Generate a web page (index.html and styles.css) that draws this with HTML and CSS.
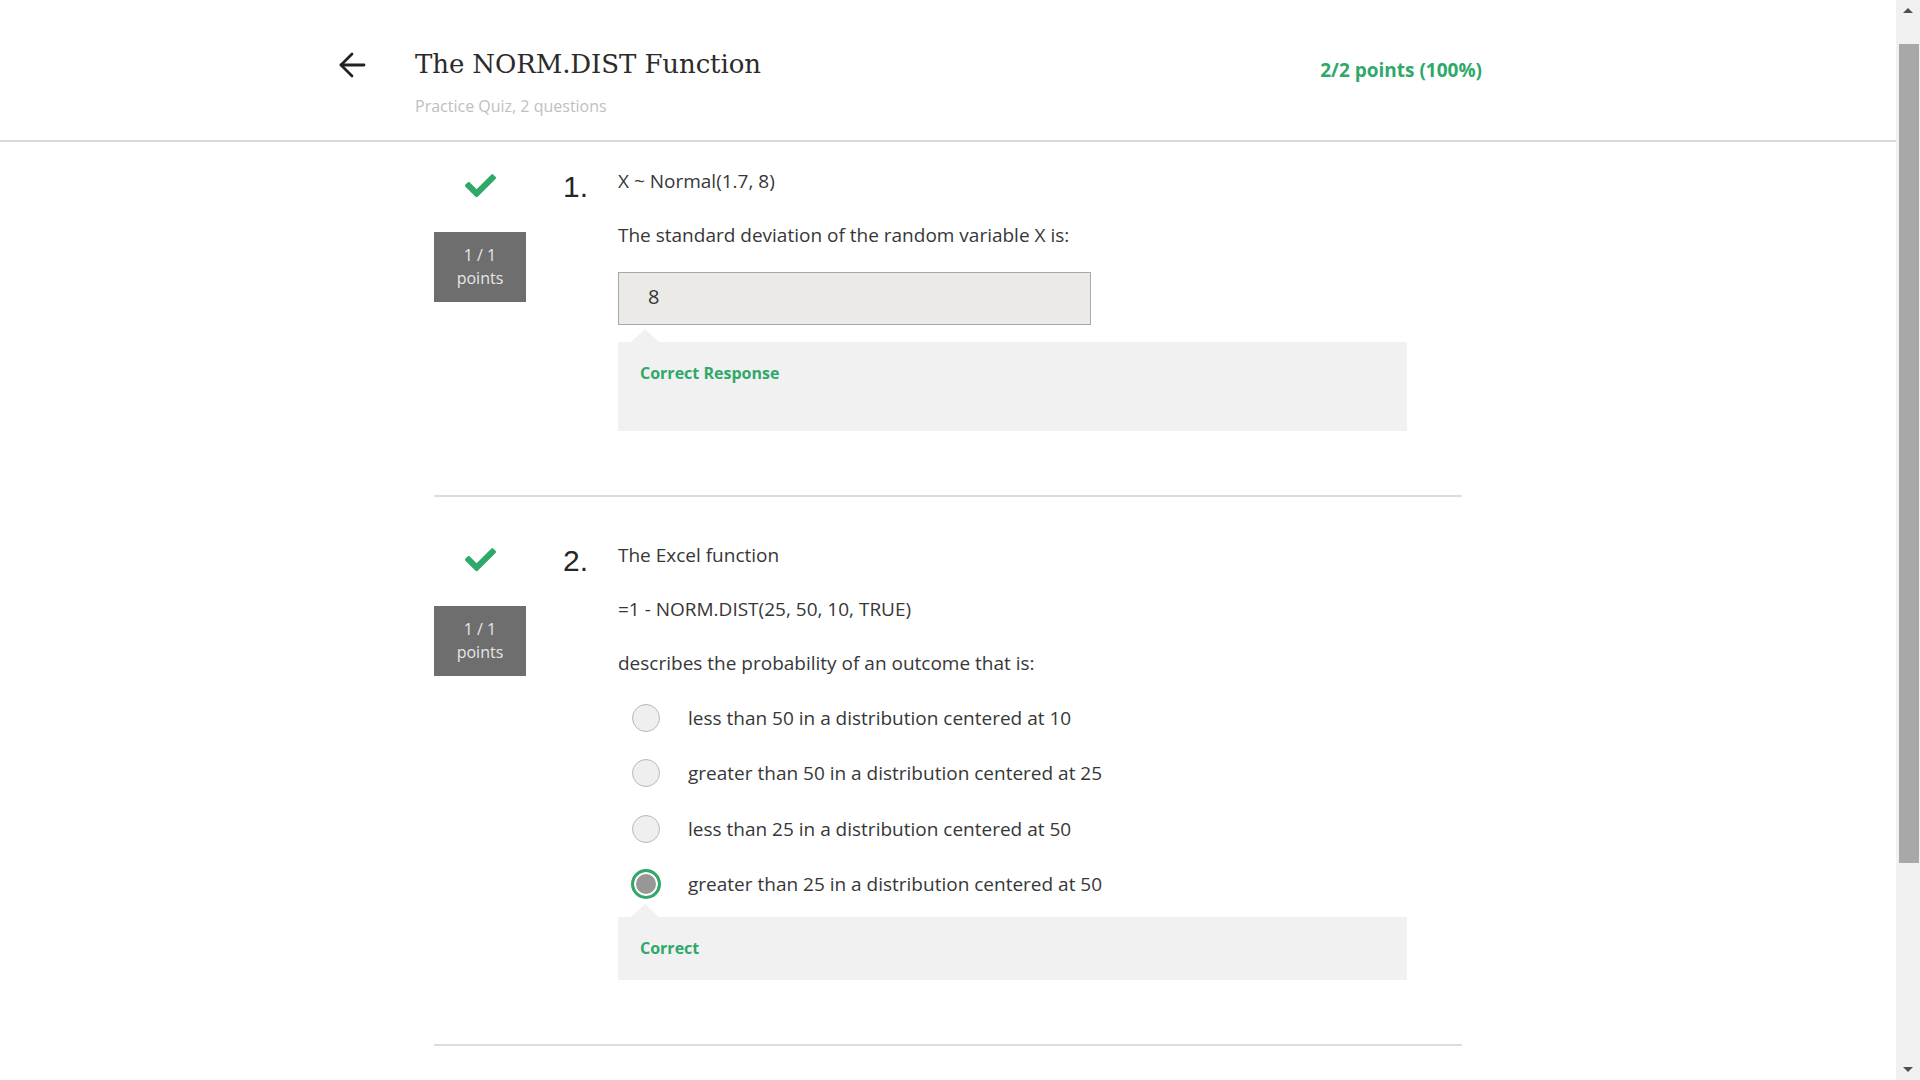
FILE: index.html
```html
<!DOCTYPE html>
<html lang="en">
<head>
<meta charset="utf-8">
<title>The NORM.DIST Function</title>
<link rel="stylesheet" href="styles.css">
</head>
<body>
<div class="window">
  <div class="main">
    <header class="header">
      <div class="header-inner">
        <a class="back" href="#" aria-label="Back">
          <svg width="28" height="28" viewBox="0 0 28 28" fill="none" stroke="#222" stroke-width="2.8" stroke-linecap="round" stroke-linejoin="round">
            <path d="M26 14 H3"/>
            <path d="M14 3 L3 14 L14 25"/>
          </svg>
        </a>
        <div class="titles">
          <h1 class="title">The NORM.DIST Function</h1>
          <div class="subtitle">Practice Quiz, 2 questions</div>
        </div>
        <div class="score">2/2 points (100%)</div>
      </div>
    </header>

    <main class="content">
      <section class="question first">
        <div class="status">
          <svg class="check" width="31" height="24" viewBox="0 64 512 392"><path fill="#2fa86a" d="M173.898 439.404l-166.4-166.4c-9.997-9.997-9.997-26.206 0-36.204l36.203-36.204c9.997-9.998 26.207-9.998 36.204 0L192 312.69 432.095 72.596c9.997-9.997 26.207-9.997 36.204 0l36.203 36.204c9.997 9.997 9.997 26.206 0 36.204l-294.4 294.401c-9.998 9.997-26.207 9.997-36.204-.001z"/></svg>
          <div class="badge"><div>1 / 1</div><div>points</div></div>
        </div>
        <div class="qnum">1.</div>
        <div class="qbody">
          <p class="line">X ~ Normal(1.7, 8)</p>
          <p class="line before-input">The standard deviation of the random variable X is:</p>
          <div class="answer-input">8</div>
          <div class="feedback feedback-tall"><span class="feedback-label">Correct Response</span></div>
        </div>
      </section>

      <hr class="sep">

      <section class="question second">
        <div class="status">
          <svg class="check" width="31" height="24" viewBox="0 64 512 392"><path fill="#2fa86a" d="M173.898 439.404l-166.4-166.4c-9.997-9.997-9.997-26.206 0-36.204l36.203-36.204c9.997-9.998 26.207-9.998 36.204 0L192 312.69 432.095 72.596c9.997-9.997 26.207-9.997 36.204 0l36.203 36.204c9.997 9.997 9.997 26.206 0 36.204l-294.4 294.401c-9.998 9.997-26.207 9.997-36.204-.001z"/></svg>
          <div class="badge"><div>1 / 1</div><div>points</div></div>
        </div>
        <div class="qnum">2.</div>
        <div class="qbody">
          <p class="line">The Excel function</p>
          <p class="line">=1 - NORM.DIST(25, 50, 10, TRUE)</p>
          <p class="line">describes the probability of an outcome that is:</p>
          <div class="options">
            <div class="option"><span class="radio"></span><span class="option-text">less than 50 in a distribution centered at 10</span></div>
            <div class="option"><span class="radio"></span><span class="option-text">greater than 50 in a distribution centered at 25</span></div>
            <div class="option"><span class="radio"></span><span class="option-text">less than 25 in a distribution centered at 50</span></div>
            <div class="option"><span class="radio radio-selected"></span><span class="option-text">greater than 25 in a distribution centered at 50</span></div>
          </div>
          <div class="feedback feedback-short"><span class="feedback-label">Correct</span></div>
        </div>
      </section>

      <hr class="sep">
    </main>
  </div>

  <div class="scrollbar">
    <span class="arrow-up"></span>
    <div class="thumb"></div>
    <div class="track-rest"></div>
    <span class="arrow-down"></span>
  </div>
</div>
</body>
</html>
```

FILE: styles.css
```css
* { box-sizing: border-box; }

html, body {
  margin: 0;
  padding: 0;
  height: 100%;
  overflow: hidden;
  background: #fff;
}

body {
  font-family: "Open Sans", "Noto Sans", sans-serif;
  color: #333;
}

.window {
  display: flex;
  width: 1920px;
  height: 1080px;
}

.main {
  flex: 1;
  height: 1080px;
  overflow: hidden;
  background: #fff;
}

/* Header */
.header {
  height: 142px;
  border-bottom: 2px solid #d9d9d9;
}

.header-inner {
  width: 1220px;
  margin: 0 auto;
  display: flex;
  align-items: flex-start;
  padding-top: 46px;
}

.back {
  display: block;
  width: 28px;
  height: 28px;
  margin-top: 5px;
  margin-right: 49px;
}
.back svg { display: block; }

.titles {
  flex: 1;
}

.title {
  margin: 0;
  font-family: "DejaVu Serif", "Liberation Serif", serif;
  font-weight: normal;
  font-size: 26px;
  line-height: 36px;
  color: #2b2b2b;
  letter-spacing: -0.1px;
}

.subtitle {
  margin-top: 13px;
  font-size: 16px;
  line-height: 22px;
  color: #c0c0c0;
}

.score {
  margin-right: 76px;
  margin-top: 11px;
  font-size: 19px;
  font-weight: 700;
  line-height: 26px;
  color: #2fa86a;
}

/* Content */
.content {
  width: 1028px;
  margin: 0 auto;
}

.question {
  display: flex;
  align-items: flex-start;
}
.question.first { padding-top: 27px; }
.question.second { padding-top: 46px; }

.status {
  width: 92px;
  display: flex;
  flex-direction: column;
  align-items: center;
}

.check {
  display: block;
  margin-top: 5px;
}

.badge {
  margin-top: 34px;
  width: 92px;
  height: 70px;
  padding-top: 12px;
  background: #6e6e6e;
  color: #e6e6e6;
  font-size: 16px;
  line-height: 23px;
  text-align: center;
}

.qnum {
  width: 55px;
  margin-left: 37px;
  font-family: "Liberation Sans", Arial, sans-serif;
  font-size: 30px;
  line-height: 36px;
  color: #262626;
}

.qbody {
  width: 789px;
}

.line {
  margin: 0 0 30px;
  font-size: 19px;
  line-height: 24px;
  color: #373737;
}
.line.before-input { margin-bottom: 25px; }

.answer-input {
  width: 473px;
  height: 53px;
  padding-left: 29px;
  border: 1px solid #a8a8a8;
  background: #ebeae7;
  font-size: 20px;
  line-height: 47px;
  color: #333;
}

.feedback {
  position: relative;
  background: #f1f1f1;
  padding: 20px 22px 0;
}
.feedback::before {
  content: "";
  position: absolute;
  left: 13px;
  top: -13px;
  border-left: 14px solid transparent;
  border-right: 14px solid transparent;
  border-bottom: 13px solid #f1f1f1;
}
.feedback-tall {
  margin-top: 17px;
  height: 89px;
}
.feedback-short {
  margin-top: 19px;
  height: 63px;
}

.feedback-label {
  display: block;
  font-size: 16px;
  font-weight: 700;
  line-height: 22px;
  color: #2fa86a;
}

/* options */
.options {
  margin-top: -1px;
  display: flex;
  flex-direction: column;
  gap: 27.4px;
}

.option {
  display: flex;
  align-items: center;
  height: 28px;
  padding-left: 14px;
}

.radio {
  flex: none;
  width: 28px;
  height: 28px;
  border-radius: 50%;
  border: 1px solid #b9b9b9;
  background: #efefef;
  margin-right: 28px;
}

.radio-selected {
  width: 30px;
  height: 30px;
  margin-left: -1px;
  margin-right: 27px;
  border: 3px solid #2fa86a;
  background: #979797;
  box-shadow: inset 0 0 0 2px #fff;
}

.option-text {
  font-size: 19px;
  line-height: 24px;
  color: #373737;
}

.sep {
  margin: 64px 0 0;
  height: 2px;
  border: 0;
  background: #dcdcdc;
}

/* Scrollbar */
.scrollbar {
  width: 24px;
  height: 1080px;
  background: #f1f1f1;
  display: flex;
  flex-direction: column;
  align-items: center;
}

.arrow-up {
  margin-top: 8px;
  width: 0;
  height: 0;
  border-left: 5px solid transparent;
  border-right: 5px solid transparent;
  border-bottom: 5px solid #505050;
}

.thumb {
  margin-top: 31px;
  width: 20px;
  height: 819px;
  background: #a8a8a8;
  margin-left: 1px;
}

.track-rest {
  flex: 1;
}

.arrow-down {
  margin-bottom: 8px;
  width: 0;
  height: 0;
  border-left: 5px solid transparent;
  border-right: 5px solid transparent;
  border-top: 5px solid #505050;
}
```
